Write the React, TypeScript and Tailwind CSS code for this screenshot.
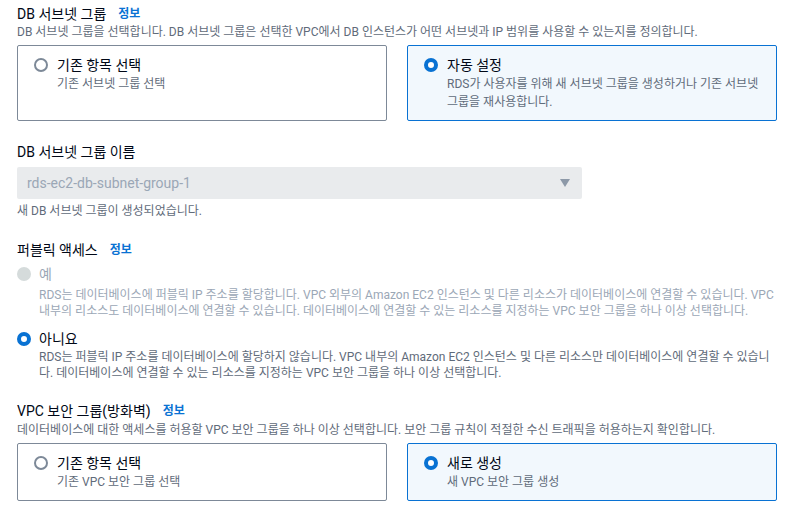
import React from 'react';

type RadioState = 'off' | 'on' | 'disabled';

function RadioDot({ state }: { state: RadioState }) {
  if (state === 'on') {
    return <span className="block w-[14px] h-[14px] rounded-full border-[4px] border-[#0972d3] bg-white shrink-0" />;
  }
  if (state === 'disabled') {
    return <span className="block w-[14px] h-[14px] rounded-full bg-[#d5dbdb] shrink-0" />;
  }
  return <span className="block w-[14px] h-[14px] rounded-full border-2 border-[#7d8998] bg-white shrink-0" />;
}

function InfoLink() {
  return <span className="ml-[12px] text-[12px] font-bold text-[#0972d3]">정보</span>;
}

interface TileProps {
  label: string;
  desc: string;
  selected?: boolean;
}

function Tile({ label, desc, selected }: TileProps) {
  return (
    <div
      className={
        selected
          ? 'rounded-[2px] border border-[#0972d3] bg-[#f2f8fd] px-[16px] py-[9px]'
          : 'rounded-[2px] border border-[#7d8998] bg-white px-[16px] py-[9px]'
      }
    >
      <div className="flex items-center gap-[9px] h-5">
        <RadioDot state={selected ? 'on' : 'off'} />
        <span className="text-[14px] leading-5 text-[#000716]">{label}</span>
      </div>
      <p className="pl-[23px] text-[12px] leading-[18px] text-[#5f6b7a]">{desc}</p>
    </div>
  );
}

export default function App() {
  return (
    <div
      className="w-[788px] h-[518px] overflow-hidden bg-white pl-[17px] pt-[4px]"
      style={{ fontFamily: 'Roboto, "Noto Sans CJK KR", sans-serif' }}
    >
      {/* DB 서브넷 그룹 */}
      <div className="flex items-center h-5">
        <span className="text-[14px] leading-5 text-[#000716]">DB 서브넷 그룹</span>
        <InfoLink />
      </div>
      <p className="text-[12px] leading-4 text-[#5f6b7a]">
        DB 서브넷 그룹을 선택합니다. DB 서브넷 그룹은 선택한 VPC에서 DB 인스턴스가 어떤 서브넷과 IP 범위를 사용할 수 있는지를 정의합니다.
      </p>
      <div className="mt-[5px] grid grid-cols-2 gap-5 w-[760px]">
        <Tile label="기존 항목 선택" desc="기존 서브넷 그룹 선택" />
        <Tile
          label="자동 설정"
          desc="RDS가 사용자를 위해 새 서브넷 그룹을 생성하거나 기존 서브넷 그룹을 재사용합니다."
          selected
        />
      </div>

      {/* DB 서브넷 그룹 이름 */}
      <div className="mt-[21px] text-[14px] leading-5 text-[#000716]">DB 서브넷 그룹 이름</div>
      <div className="mt-[5px] w-[565px] h-[32px] rounded-[2px] bg-[#e9ebed] flex items-center justify-between pl-[10px] pr-[12px]">
        <span className="text-[14px] text-[#9ba7b6]">rds-ec2-db-subnet-group-1</span>
        <svg width="10" height="8" viewBox="0 0 10 8">
          <path d="M0 0 L10 0 L5 8 Z" fill="#8d99a8" />
        </svg>
      </div>
      <p className="mt-[4px] text-[12px] leading-4 text-[#5f6b7a]">새 DB 서브넷 그룹이 생성되었습니다.</p>

      {/* 퍼블릭 액세스 */}
      <div className="mt-[21px] flex items-center h-5">
        <span className="text-[14px] leading-5 text-[#000716]">퍼블릭 액세스</span>
        <InfoLink />
      </div>
      <div className="mt-[4px] flex items-center gap-[8px] h-5">
        <RadioDot state="disabled" />
        <span className="text-[14px] leading-5 text-[#9ba7b6]">예</span>
      </div>
      <p className="mt-[3px] pl-[22px] w-[760px] text-[12px] leading-4 text-[#9ba7b6]">
        RDS는 데이터베이스에 퍼블릭 IP 주소를 할당합니다. VPC 외부의 Amazon EC2 인스턴스 및 다른 리소스가 데이터베이스에 연결할 수 있습니다. VPC 내부의 리소스도 데이터베이스에 연결할 수 있습니다. 데이터베이스에 연결할 수 있는 리소스를 지정하는 VPC 보안 그룹을 하나 이상 선택합니다.
      </p>
      <div className="mt-[10px] flex items-center gap-[8px] h-5">
        <RadioDot state="on" />
        <span className="text-[14px] leading-5 text-[#000716]">아니요</span>
      </div>
      <p className="pl-[22px] w-[760px] text-[12px] leading-4 text-[#5f6b7a]">
        RDS는 퍼블릭 IP 주소를 데이터베이스에 할당하지 않습니다. VPC 내부의 Amazon EC2 인스턴스 및 다른 리소스만 데이터베이스에 연결할 수 있습니다. 데이터베이스에 연결할 수 있는 리소스를 지정하는 VPC 보안 그룹을 하나 이상 선택합니다.
      </p>

      {/* VPC 보안 그룹 */}
      <div className="mt-[20px] flex items-center h-5">
        <span className="text-[14px] leading-5 text-[#000716]">VPC 보안 그룹(방화벽)</span>
        <InfoLink />
      </div>
      <p className="mt-[1px] text-[12px] leading-4 text-[#5f6b7a]">
        데이터베이스에 대한 액세스를 허용할 VPC 보안 그룹을 하나 이상 선택합니다. 보안 그룹 규칙이 적절한 수신 트래픽을 허용하는지 확인합니다.
      </p>
      <div className="mt-[5px] grid grid-cols-2 gap-5 w-[760px]">
        <Tile label="기존 항목 선택" desc="기존 VPC 보안 그룹 선택" />
        <Tile label="새로 생성" desc="새 VPC 보안 그룹 생성" selected />
      </div>
    </div>
  );
}
